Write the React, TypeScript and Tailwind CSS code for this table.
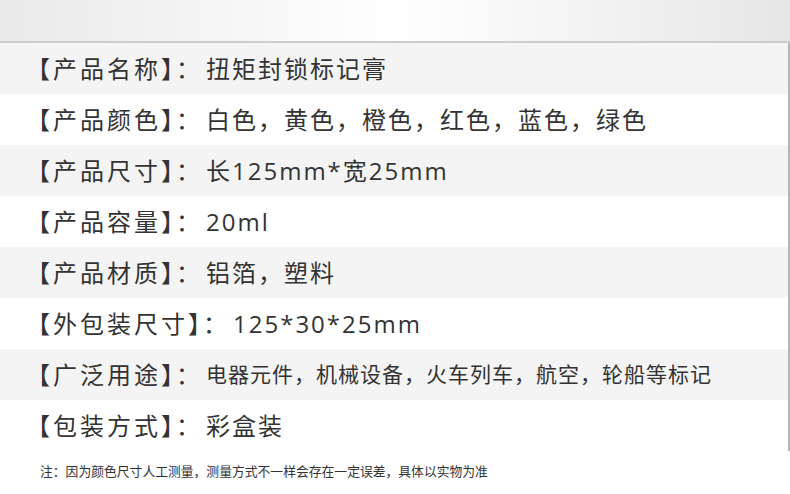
import React from "react";

const rows: { label: string; value: string; small?: boolean }[] = [
  { label: "【产品名称】：", value: "扭矩封锁标记膏" },
  { label: "【产品颜色】：", value: "白色，黄色，橙色，红色，蓝色，绿色" },
  { label: "【产品尺寸】：", value: "长125mm*宽25mm" },
  { label: "【产品容量】：", value: "20ml" },
  { label: "【产品材质】：", value: "铝箔，塑料" },
  { label: "【外包装尺寸】：", value: "125*30*25mm" },
  { label: "【广泛用途】：", value: "电器元件，机械设备，火车列车，航空，轮船等标记", small: true },
  { label: "【包装方式】：", value: "彩盒装" },
];

export default function App() {
  return (
    <div
      className="w-[790px] h-[494px] bg-white overflow-hidden text-[#333333]"
      style={{ fontFamily: '"Open Sans", "Noto Sans CJK SC", sans-serif' }}
    >
      <div className="h-[41px] bg-gradient-to-r from-[#e9e9e9] via-white to-[#e6e6e6]" />
      <div className="h-[2px] bg-[#cccccc]" />
      <div className="w-[790px] border-r-2 border-[#b5b5b5] flex flex-col">
        {rows.map((r, i) => (
          <div
            key={i}
            className={`h-[51px] flex items-center pl-[26px] ${i % 2 === 0 ? "bg-[#f4f4f4]" : "bg-white"}`}
          >
            <span className="text-[24px] tracking-[3px] leading-none">{r.label}</span>
            <span
              className={`leading-none ml-[3px] ${r.small ? "text-[21px] tracking-[1px]" : "text-[24px] tracking-[2px]"}`}
            >
              {r.value}
            </span>
          </div>
        ))}
      </div>
      <div className="pl-[40px] pt-[14px] text-[12.8px] leading-none">
        注：因为颜色尺寸人工测量，测量方式不一样会存在一定误差，具体以实物为准
      </div>
    </div>
  );
}
